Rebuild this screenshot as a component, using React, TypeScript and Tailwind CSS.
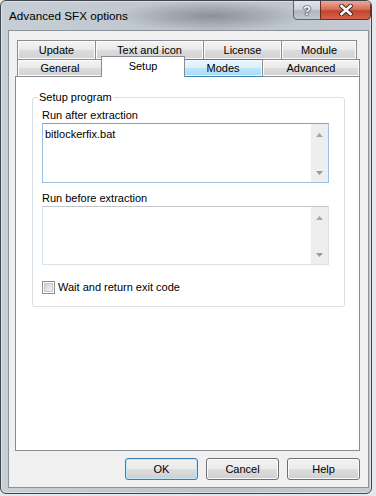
import React from "react";

const tabFace =
  "bg-[linear-gradient(#f4f4f4_0%,#e9e9e9_50%,#dcdcdc_51%,#d3d3d3_100%)] shadow-[inset_0_0_0_1px_#fbfbfb]";
const hoverFace =
  "bg-[linear-gradient(#eaf6fd_0%,#d9f0fc_50%,#bee6fd_51%,#a7d9f5_100%)] shadow-[inset_0_0_0_1px_#f4fbfe]";
const btnFace =
  "bg-[linear-gradient(#f2f2f2_0%,#ebebeb_50%,#dddddd_51%,#cfcfcf_100%)]";

function ScrollArrows() {
  return (
    <div className="flex w-[17px] flex-col items-center justify-between bg-[#eeeeee] pt-[9px] pb-[7px]">
      <svg width="7" height="4" viewBox="0 0 7 4">
        <path d="M0 4 L3.5 0 L7 4 Z" fill="#a6a6a6" />
      </svg>
      <svg width="7" height="4" viewBox="0 0 7 4">
        <path d="M0 0 L3.5 4 L7 0 Z" fill="#9a9a9a" />
      </svg>
    </div>
  );
}

function Field({ value, active, h }: { value?: string; active?: boolean; h: string }) {
  return (
    <div
      className={
        "flex w-[287px] border bg-white " +
        h +
        (active ? " border-[#9cbfe2] border-t-[#7da2ce]" : " border-[#dde2e7] border-t-[#c3c7cc]")
      }
    >
      <div className="flex-1 pt-[3px] pl-[2px] leading-[15px]">{value}</div>
      <ScrollArrows />
    </div>
  );
}

function Button({ label, primary }: { label: string; primary?: boolean }) {
  return (
    <div
      className={
        "flex h-[22px] w-[73px] items-center justify-center rounded-[3px] border " +
        btnFace +
        (primary
          ? " border-[#3c7fb1] shadow-[inset_0_0_0_1px_#bfe6fb]"
          : " border-[#707070] shadow-[inset_0_0_0_1px_#fbfbfb]")
      }
    >
      {label}
    </div>
  );
}

export default function App() {
  return (
    <div className="h-[496px] w-[376px] overflow-hidden bg-[#e4e8ec] font-['Liberation_Sans',Arial,sans-serif] text-[11px] text-black">
      <div className="flex h-[494px] w-[372px] flex-col overflow-hidden rounded-[6px] border border-[#40454b] bg-[radial-gradient(ellipse_95px_15px_at_210px_15px,#8c9196,transparent),linear-gradient(90deg,#c7ced5,#bcc3ca_60%,#c4cbd2)] shadow-[inset_0_0_0_1px_rgba(255,255,255,0.45)]">
        {/* Title bar */}
        <div className="flex h-[29px] shrink-0 items-start">
          <div className="flex-1 pt-[7px] pl-[8px] text-[11.7px] leading-[15px]">
            Advanced SFX options
          </div>
          <div className="-mt-px flex">
            <div className="flex h-[20px] w-[28px] items-center justify-center rounded-bl-[4px] border border-[#5c636b] bg-[linear-gradient(#e3e7eb,#cdd3d9_45%,#aeb6bf_55%,#c2c9d0)] text-[13px] font-bold leading-none text-white [text-shadow:0_0_1px_#2a2f35,0_0_1px_#2a2f35,0_0_2px_#2a2f35]">
              ?
            </div>
            <div className="-ml-px flex h-[20px] w-[51px] items-center justify-center rounded-br-[4px] border border-[#6b2a1f] bg-[linear-gradient(#e9a99a,#d9715c_45%,#c4422c_55%,#d2654b)]">
              <svg width="14" height="12" viewBox="0 0 14 12">
                <path d="M2.5 2 L11.5 10 M11.5 2 L2.5 10" stroke="#3a2a28" strokeWidth="4.5" strokeLinecap="square" />
                <path d="M2.5 2 L11.5 10 M11.5 2 L2.5 10" stroke="#ffffff" strokeWidth="2.6" strokeLinecap="square" />
              </svg>
            </div>
          </div>
        </div>

        {/* Client area */}
        <div className="ml-[7px] h-[458px] w-[361px] border border-[#8a929b] bg-[#f0f0f0]">
          <div className="mt-[9px] ml-[6px]">
            {/* back row */}
            <div className="flex h-[19px] pl-[2px]">
              <div className={"flex h-[19px] w-[79px] items-center justify-center border border-b-0 border-[#898c95] " + tabFace}>
                Update
              </div>
              <div className={"-ml-px flex h-[19px] w-[109px] items-center justify-center border border-b-0 border-[#898c95] " + tabFace}>
                Text and icon
              </div>
              <div className={"-ml-px flex h-[19px] w-[79px] items-center justify-center border border-b-0 border-[#898c95] " + tabFace}>
                License
              </div>
              <div className={"-ml-px flex h-[19px] w-[76px] items-center justify-center border border-b-0 border-[#898c95] " + tabFace}>
                Module
              </div>
            </div>
            {/* front row */}
            <div className="relative z-10 -mt-[3px] -mb-px flex h-[21px] items-end">
              <div className={"ml-[2px] flex h-[18px] w-[86px] items-center justify-center border border-[#898c95] " + tabFace}>
                General
              </div>
              <div className="relative z-10 -ml-[2px] flex h-[21px] w-[84px] items-center justify-center border border-b-0 border-[#898c95] bg-white pb-[1px]">
                Setup
              </div>
              <div className={"-ml-[2px] flex h-[18px] w-[80px] items-center justify-center border border-[#3c7fb1] " + hoverFace}>
                Modes
              </div>
              <div className={"-ml-px flex h-[18px] w-[98px] items-center justify-center border border-[#898c95] " + tabFace}>
                Advanced
              </div>
            </div>
            {/* page */}
            <div className="h-[375px] w-[345px] border border-[#898c95] bg-white pt-[20px] pl-[16px]">
              <div className="relative h-[210px] w-[313px] rounded-[3px] border border-[#d5dfe5] px-[9px] pt-[10px]">
                <div className="absolute -top-[8px] left-[5px] bg-white px-[1px] leading-[15px]">
                  Setup program
                </div>
                <div className="leading-[15px]">Run after extraction</div>
                <Field value="bitlockerfix.bat" active h="h-[60px]" />
                <div className="mt-[8px] leading-[15px]">Run before extraction</div>
                <Field h="h-[59px]" />
                <div className="mt-[16px] flex h-[13px] items-center gap-[3px]">
                  <div className="h-[13px] w-[13px] border border-[#8e8f8f] bg-white p-[1px]">
                    <div className="h-full w-full border border-[#c4c8cd] bg-[linear-gradient(135deg,#cfd3d8,#f3f3f3)]" />
                  </div>
                  <span className="leading-[15px]">Wait and return exit code</span>
                </div>
              </div>
            </div>
          </div>
          {/* buttons */}
          <div className="mt-[7px] flex justify-end gap-[8px] pr-[8px]">
            <Button label="OK" primary />
            <Button label="Cancel" />
            <Button label="Help" />
          </div>
        </div>
      </div>
    </div>
  );
}
